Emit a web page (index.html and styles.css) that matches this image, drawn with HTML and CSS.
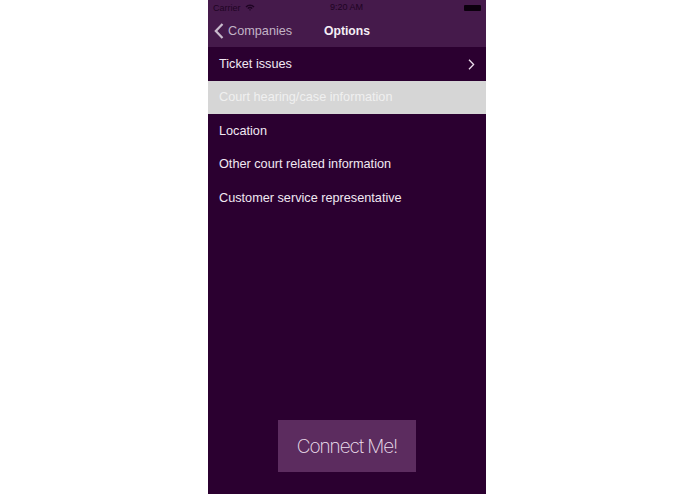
FILE: index.html
```html
<!DOCTYPE html>
<html lang="en">
<head>
    <meta charset="UTF-8">
    <meta name="viewport" content="width=device-width, initial-scale=1.0">
    <title>Options</title>
    <link rel="stylesheet" href="styles.css">
</head>
<body>
    <div class="phone">
        <div class="top-bar">
            <div class="status-bar">
                <div class="status-left">
                    <span>Carrier</span>
                    <svg class="wifi" width="10" height="7" viewBox="0 0 10 7">
                        <path d="M0.5 2.4 A6.4 6.4 0 0 1 9.5 2.4 L8.5 3.4 A5 5 0 0 0 1.5 3.4 Z M2.3 4.1 A3.9 3.9 0 0 1 7.7 4.1 L6.8 5 A2.6 2.6 0 0 0 3.2 5 Z M4 5.7 A1.5 1.5 0 0 1 6 5.7 L5 6.8 Z"/>
                    </svg>
                </div>
                <span class="status-time">9:20 AM</span>
                <div class="battery"></div>
            </div>
            <div class="nav-bar">
                <div class="back">
                    <svg width="10" height="16" viewBox="0 0 10 16">
                        <path d="M8.5 1 L1.8 8 L8.5 15" fill="none" stroke="#c9bbcd" stroke-width="2.2"/>
                    </svg>
                    <span>Companies</span>
                </div>
                <div class="nav-title">Options</div>
            </div>
        </div>
        <div class="options">
            <div class="option">
                <span>Ticket issues</span>
                <svg width="7" height="11" viewBox="0 0 7 11">
                    <path d="M1 0.8 L5.6 5.5 L1 10.2" fill="none" stroke="#ecdcec" stroke-width="1.3"/>
                </svg>
            </div>
            <div class="option selected"><span>Court hearing/case information</span></div>
            <div class="option"><span>Location</span></div>
            <div class="option"><span>Other court related information</span></div>
            <div class="option"><span>Customer service representative</span></div>
        </div>
        <div class="connect-wrap">
            <button class="connect">Connect Me!</button>
        </div>
    </div>
</body>
</html>
```

FILE: styles.css
```css
html, body {
    height: 100%;
}
body {
    margin: 0;
    background-color: #fff;
    font-family: "Liberation Sans", Arial, sans-serif;
    overflow: hidden;
}
.phone {
    width: 278px;
    height: 494px;
    margin-left: 208px;
    background: #2b0030;
    display: flex;
    flex-direction: column;
}
.top-bar {
    height: 47px;
    background: #451a4b;
}
.status-bar {
    height: 15px;
    padding: 0 5px;
    display: flex;
    align-items: center;
    justify-content: space-between;
    position: relative;
    font-size: 9px;
    color: #1f0424;
}
.status-left {
    display: flex;
    align-items: center;
    gap: 4px;
}
.wifi {
    fill: #1f0424;
}
.status-time {
    position: absolute;
    left: 122px;
    top: 2px;
}
.battery {
    width: 17px;
    height: 6px;
    background: #0c000e;
    border-radius: 1px;
}
.nav-bar {
    height: 32px;
    display: flex;
    align-items: center;
    position: relative;
}
.back {
    display: flex;
    align-items: center;
    gap: 4px;
    padding-left: 6px;
    font-size: 12.7px;
    color: #c2b3c6;
}
.nav-title {
    position: absolute;
    left: 116px;
    font-size: 12.2px;
    font-weight: bold;
    color: #f5eef6;
}
.options {
    flex: 1;
    padding-top: 0.4px;
}
.option {
    height: 33.4px;
    padding: 0 11px;
    display: flex;
    align-items: center;
    justify-content: space-between;
    font-size: 12.7px;
    color: #f1e8f2;
}
.selected {
    background: #d6d6d6;
    color: #f0f0f0;
}
.connect-wrap {
    display: flex;
    justify-content: center;
    padding-bottom: 22px;
}
.connect {
    width: 138px;
    height: 52px;
    border: none;
    background: #5c2c5f;
    color: #f0e0f0;
    font-family: Inter, "Liberation Sans", sans-serif;
    font-weight: 200;
    font-size: 19px;
    letter-spacing: -1.05px;
}
```
